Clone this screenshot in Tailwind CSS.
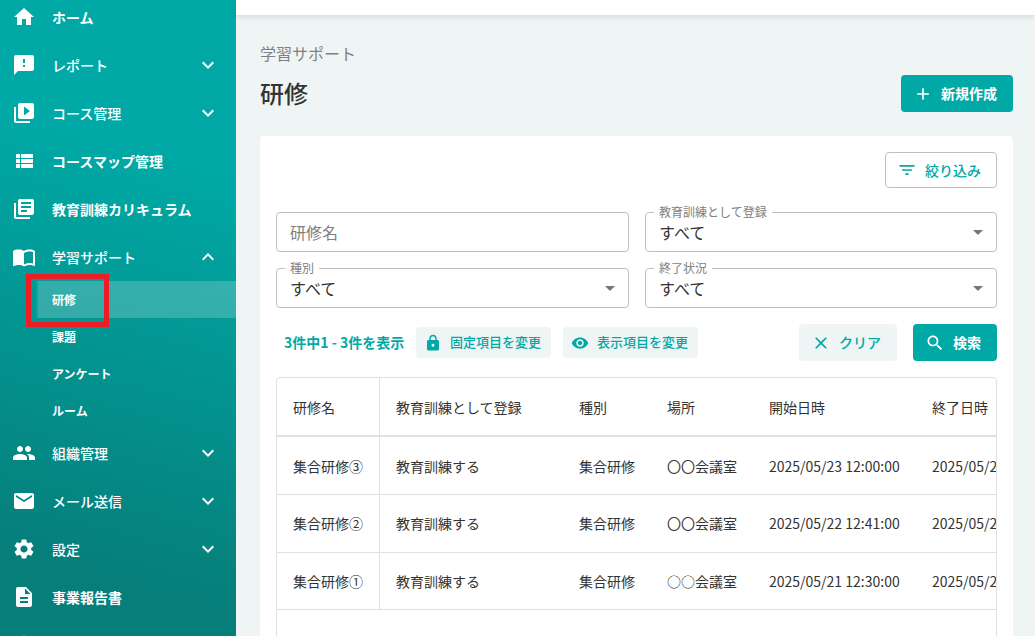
<!DOCTYPE html>
<html lang="ja">
<head>
  <meta charset="UTF-8" />
  <meta name="viewport" content="width=device-width, initial-scale=1.0" />
  <title>研修</title>
  <script src="https://cdn.jsdelivr.net/npm/@tailwindcss/browser@4"></script>
</head>
<body class="flex h-screen overflow-hidden bg-[#eff5f5] font-['Noto_Sans_CJK_JP',sans-serif] text-sm text-[#333]">

  <!-- Sidebar -->
  <aside class="h-screen w-[236px] shrink-0 overflow-hidden bg-[linear-gradient(195deg,#00a9a6_25%,#067e7a_88%)] text-white">
    <nav class="-mt-[7px]">
      <a class="flex h-12 items-center pl-3 font-bold">
        <svg class="mr-4 size-6" viewBox="0 0 24 24" fill="currentColor"><path d="M10 20v-6h4v6h5v-8h3L12 3 2 12h3v8z"/></svg>
        ホーム
      </a>
      <a class="flex h-12 items-center pl-3 pr-4 font-medium">
        <svg class="mr-4 size-6" viewBox="0 0 24 24" fill="currentColor"><path d="M20 2H4c-1.100 0-1.990.9-1.990 2L2 22l4-4h14c1.100 0 2-.9 2-2V4c0-1.100-.9-2-2-2zm-7 12h-2v-2h2v2zm0-4h-2V6h2v4z"/></svg>
        <span class="flex-1">レポート</span>
        <svg class="size-6" viewBox="0 0 24 24" fill="currentColor"><path d="M16.590 8.590 12 13.170 7.410 8.590 6 10l6 6 6-6z"/></svg>
      </a>
      <a class="flex h-12 items-center pl-3 pr-4 font-medium">
        <svg class="mr-4 size-6" viewBox="0 0 24 24" fill="currentColor"><path d="M4 6H2v14c0 1.100.9 2 2 2h14v-2H4V6zm16-4H8c-1.100 0-2 .9-2 2v12c0 1.100.9 2 2 2h12c1.100 0 2-.9 2-2V4c0-1.100-.9-2-2-2zm-8 12.500v-9l6 4.500-6 4.500z"/></svg>
        <span class="flex-1">コース管理</span>
        <svg class="size-6" viewBox="0 0 24 24" fill="currentColor"><path d="M16.590 8.590 12 13.170 7.410 8.590 6 10l6 6 6-6z"/></svg>
      </a>
      <a class="flex h-12 items-center pl-3 font-bold">
        <svg class="mr-4 size-6" viewBox="0 0 24 24" fill="currentColor"><path d="M4 14h4v-4H4v4zm0 5h4v-4H4v4zM4 9h4V5H4v4zm5 5h12v-4H9v4zm0 5h12v-4H9v4zM9 5v4h12V5H9z"/></svg>
        コースマップ管理
      </a>
      <a class="flex h-12 items-center pl-3 font-bold">
        <svg class="mr-4 size-6" viewBox="0 0 24 24" fill="currentColor"><path d="M4 6H2v14c0 1.100.9 2 2 2h14v-2H4V6zm16-4H8c-1.100 0-2 .9-2 2v12c0 1.100.9 2 2 2h12c1.100 0 2-.9 2-2V4c0-1.100-.9-2-2-2zm-1 9H9V9h10v2zm-4 4H9v-2h6v2zm4-8H9V5h10v2z"/></svg>
        教育訓練カリキュラム
      </a>
      <a class="flex h-12 items-center pl-3 pr-4 font-medium">
        <svg class="mr-4 size-6" viewBox="0 0 24 24" fill="currentColor"><path d="M21 5c-1.110-.35-2.330-.5-3.500-.5-1.950 0-4.050.4-5.500 1.500-1.450-1.100-3.550-1.500-5.500-1.500S2.450 4.900 1 6v14.650c0 .25.25.5.5.5.1 0 .15-.05.25-.05C3.100 20.450 5.050 20 6.500 20c1.950 0 4.050.4 5.500 1.500 1.350-.85 3.800-1.500 5.500-1.500 1.650 0 3.350.3 4.750 1.050.1.050.15.050.25.050.25 0 .5-.25.5-.5V6c-.6-.45-1.250-.75-2-1zm0 13.500c-1.100-.35-2.300-.5-3.500-.5-1.700 0-4.150.65-5.500 1.500V8c1.350-.85 3.800-1.500 5.500-1.500 1.200 0 2.400.15 3.500.5v11.500z"/></svg>
        <span class="flex-1">学習サポート</span>
        <svg class="size-6" viewBox="0 0 24 24" fill="currentColor"><path d="m12 8-6 6 1.410 1.410L12 10.830l4.590 4.580L18 14z"/></svg>
      </a>

      <div class="text-xs font-bold">
        <a class="relative ml-9 flex h-[37px] items-center border-l-2 border-[#00a9a6] bg-white/20 bg-clip-padding pl-3.5 pt-px">
          研修
          <span class="absolute -left-3 -top-[7px] h-[53px] w-[83px] border-[5px] border-[#ee1c25]"></span>
        </a>
        <a class="flex h-[37px] items-center pl-[52px] pt-px">課題</a>
        <a class="flex h-[37px] items-center pl-[52px] pt-px">アンケート</a>
        <a class="flex h-[37px] items-center pl-[52px] pt-px">ルーム</a>
      </div>

      <a class="flex h-12 items-center pl-3 pr-4 font-medium">
        <svg class="mr-4 size-6" viewBox="0 0 24 24" fill="currentColor"><path d="M16 11c1.660 0 2.990-1.340 2.990-3S17.660 5 16 5c-1.660 0-3 1.340-3 3s1.340 3 3 3zm-8 0c1.660 0 2.990-1.340 2.990-3S9.660 5 8 5C6.340 5 5 6.340 5 8s1.340 3 3 3zm0 2c-2.330 0-7 1.170-7 3.500V19h14v-2.500c0-2.330-4.670-3.500-7-3.500zm8 0c-.29 0-.62.020-.97.050 1.160.84 1.970 1.970 1.970 3.450V19h6v-2.500c0-2.330-4.670-3.500-7-3.500z"/></svg>
        <span class="flex-1">組織管理</span>
        <svg class="size-6" viewBox="0 0 24 24" fill="currentColor"><path d="M16.590 8.590 12 13.170 7.410 8.590 6 10l6 6 6-6z"/></svg>
      </a>
      <a class="flex h-12 items-center pl-3 pr-4 font-medium">
        <svg class="mr-4 size-6" viewBox="0 0 24 24" fill="currentColor"><path d="M20 4H4c-1.100 0-1.990.9-1.990 2L2 18c0 1.100.9 2 2 2h16c1.100 0 2-.9 2-2V6c0-1.100-.9-2-2-2zm0 4-8 5-8-5V6l8 5 8-5v2z"/></svg>
        <span class="flex-1">メール送信</span>
        <svg class="size-6" viewBox="0 0 24 24" fill="currentColor"><path d="M16.590 8.590 12 13.170 7.410 8.590 6 10l6 6 6-6z"/></svg>
      </a>
      <a class="flex h-12 items-center pl-3 pr-4 font-medium">
        <svg class="mr-4 size-6" viewBox="0 0 24 24" fill="currentColor"><path d="M19.140 12.940c.04-.3.060-.61.060-.94 0-.32-.02-.64-.07-.94l2.030-1.580c.18-.14.23-.41.12-.61l-1.920-3.320c-.12-.22-.37-.29-.59-.22l-2.390.96c-.5-.38-1.030-.7-1.620-.94l-.36-2.540c-.04-.24-.24-.41-.48-.41h-3.840c-.24 0-.43.17-.47.41l-.36 2.540c-.59.24-1.130.57-1.620.94l-2.390-.96c-.22-.08-.47 0-.59.22L2.740 8.870c-.12.21-.08.47.12.61l2.030 1.580c-.05.3-.09.63-.09.94s.02.64.07.94l-2.030 1.580c-.18.14-.23.41-.12.61l1.920 3.320c.12.22.37.29.59.22l2.390-.96c.5.38 1.030.7 1.620.94l.36 2.540c.05.24.24.41.48.41h3.840c.24 0 .44-.17.47-.41l.36-2.540c.59-.24 1.130-.56 1.620-.94l2.390.96c.22.08.47 0 .59-.22l1.920-3.320c.12-.22.07-.47-.12-.61l-2.010-1.580zM12 15.600c-1.980 0-3.600-1.620-3.600-3.600s1.620-3.600 3.600-3.600 3.600 1.620 3.600 3.600-1.620 3.600-3.600 3.600z"/></svg>
        <span class="flex-1">設定</span>
        <svg class="size-6" viewBox="0 0 24 24" fill="currentColor"><path d="M16.590 8.590 12 13.170 7.410 8.590 6 10l6 6 6-6z"/></svg>
      </a>
      <a class="flex h-12 items-center pl-3 font-bold">
        <svg class="mr-4 size-6" viewBox="0 0 24 24" fill="currentColor"><path d="M14 2H6c-1.100 0-1.990.9-1.990 2L4 20c0 1.100.89 2 1.990 2H18c1.100 0 2-.9 2-2V8l-6-6zm2 16H8v-2h8v2zm0-4H8v-2h8v2zm-3-5V3.500L18.500 9H13z"/></svg>
        事業報告書
      </a>
      <a class="flex h-12 items-center pl-3">
        <svg class="size-6" viewBox="0 0 24 24" fill="currentColor"><path d="m12 2 3 7 7 1-5 5 1 7-6-4-6 4 1-7-5-5 7-1z"/></svg>
      </a>
    </nav>
  </aside>

  <div class="flex min-w-0 flex-1 flex-col">
    <header class="h-[15px] shrink-0 bg-white shadow-[0_1px_6px_rgba(0,0,0,0.15)]"></header>

    <main class="pl-6 pr-[22px] pt-[26px]">
      <p class="text-base leading-6 text-[#808080]">学習サポート</p>
      <div class="mt-2.5 flex h-[37px] items-center justify-between">
        <h1 class="pb-0.5 text-2xl font-medium">研修</h1>
        <button class="flex h-[37px] w-28 items-center rounded bg-[#00a9a6] pl-3 font-bold text-white">
          <svg class="mr-2 size-5" viewBox="0 0 24 24" fill="currentColor"><path d="M19 13h-6v6h-2v-6H5v-2h6V5h2v6h6v2z"/></svg>
          <span class="pb-0.5">新規作成</span>
        </button>
      </div>

      <section class="mt-6 h-[520px] rounded bg-white p-4">
        <div class="flex justify-end">
          <button class="flex h-9 w-28 items-center rounded border border-[#c0c0c0] pl-[11px] font-medium text-[#00a9a6]">
            <svg class="mr-2 size-5" viewBox="0 0 24 24" fill="currentColor"><path d="M10 18h4v-2h-4v2zM3 6v2h18V6H3zm3 7h12v-2H6v2z"/></svg>
            絞り込み
          </button>
        </div>

        <!-- Search conditions -->
        <div class="mt-6 grid grid-cols-[353px_352px] gap-4">
          <div class="flex h-10 items-center rounded border border-[#c0c0c0] px-[13px] text-base text-[#808080]">研修名</div>
          <div class="relative flex h-10 items-center justify-between rounded border border-[#c0c0c0] pl-[13px] pr-1.5 text-base">
            <span class="absolute left-2 -top-[9px] bg-white px-[5px] text-xs leading-4 text-[#808080]">教育訓練として登録</span>
            <span>すべて</span>
            <svg class="size-6 text-[#757575]" viewBox="0 0 24 24" fill="currentColor"><path d="m7 10 5 5 5-5z"/></svg>
          </div>
          <div class="relative flex h-10 items-center justify-between rounded border border-[#c0c0c0] pl-[13px] pr-1.5 text-base">
            <span class="absolute left-2 -top-[9px] bg-white px-[5px] text-xs leading-4 text-[#808080]">種別</span>
            <span>すべて</span>
            <svg class="size-6 text-[#757575]" viewBox="0 0 24 24" fill="currentColor"><path d="m7 10 5 5 5-5z"/></svg>
          </div>
          <div class="relative flex h-10 items-center justify-between rounded border border-[#c0c0c0] pl-[13px] pr-1.5 text-base">
            <span class="absolute left-2 -top-[9px] bg-white px-[5px] text-xs leading-4 text-[#808080]">終了状況</span>
            <span>すべて</span>
            <svg class="size-6 text-[#757575]" viewBox="0 0 24 24" fill="currentColor"><path d="m7 10 5 5 5-5z"/></svg>
          </div>
        </div>

        <!-- Actions -->
        <div class="mt-4 flex h-[37px] items-center text-[#00a9a6]">
          <span class="w-[140px] whitespace-nowrap pb-0.5 pl-2 font-bold">3件中1 - 3件を表示</span>
          <button class="flex h-[31px] w-[135px] items-center rounded bg-[#eff5f5] pl-2 text-[13px] font-medium">
            <svg class="mr-2 size-[18px]" viewBox="0 0 24 24" fill="currentColor"><path d="M18 8h-1V6c0-2.760-2.240-5-5-5S7 3.240 7 6v2H6c-1.100 0-2 .9-2 2v10c0 1.100.9 2 2 2h12c1.100 0 2-.9 2-2V10c0-1.100-.9-2-2-2zm-6 9c-1.100 0-2-.9-2-2s.9-2 2-2 2 .9 2 2-.9 2-2 2zm3.100-9H8.900V6c0-1.710 1.390-3.100 3.100-3.100s3.100 1.390 3.100 3.100v2z"/></svg>
            固定項目を変更
          </button>
          <button class="ml-3 flex h-[31px] w-[135px] items-center rounded bg-[#eff5f5] pl-2 text-[13px] font-medium">
            <svg class="mr-2 size-[18px]" viewBox="0 0 24 24" fill="currentColor"><path d="M12 4.500C7 4.500 2.730 7.610 1 12c1.730 4.390 6 7.500 11 7.500s9.270-3.110 11-7.500c-1.730-4.390-6-7.500-11-7.500zM12 17c-2.760 0-5-2.240-5-5s2.240-5 5-5 5 2.240 5 5-2.240 5-5 5zm0-8c-1.660 0-3 1.340-3 3s1.340 3 3 3 3-1.340 3-3-1.340-3-3-3z"/></svg>
            表示項目を変更
          </button>
          <button class="ml-auto flex h-[37px] w-[98px] items-center rounded bg-[#eff5f5] pl-3 font-medium">
            <svg class="mr-2 size-5" viewBox="0 0 24 24" fill="currentColor"><path d="M19 6.410 17.590 5 12 10.590 6.410 5 5 6.410 10.590 12 5 17.590 6.410 19 12 13.410 17.590 19 19 17.590 13.410 12z"/></svg>
            <span class="pb-0.5">クリア</span>
          </button>
          <button class="ml-4 flex h-[37px] w-[84px] items-center rounded bg-[#00a9a6] pl-3 font-bold text-white">
            <svg class="mr-2 size-5" viewBox="0 0 24 24" fill="currentColor"><path d="M15.500 14h-.79l-.28-.27C15.410 12.590 16 11.110 16 9.500 16 5.910 13.090 3 9.500 3S3 5.910 3 9.500 5.910 16 9.500 16c1.610 0 3.090-.59 4.230-1.570l.27.28v.79l5 4.990L20.490 19l-4.990-5zm-6 0C7.010 14 5 11.990 5 9.500S7.010 5 9.500 5 14 7.010 14 9.500 11.990 14 9.500 14z"/></svg>
            <span class="pb-0.5">検索</span>
          </button>
        </div>

        <!-- Training list -->
        <div class="mt-4 h-[300px] overflow-hidden rounded border border-[#e0e0e0]">
          <table class="w-[803px] table-fixed border-separate border-spacing-0 whitespace-nowrap text-left">
            <thead>
              <tr class="h-[59px] *:border-b-2 *:border-[#e0e0e0] *:px-4 *:font-normal">
                <th class="w-[103px] border-r">研修名</th>
                <th class="w-[183px]">教育訓練として登録</th>
                <th class="w-[88px]">種別</th>
                <th class="w-[102px]">場所</th>
                <th class="w-[163px]">開始日時</th>
                <th class="w-[164px]">終了日時</th>
              </tr>
            </thead>
            <tbody>
              <tr class="h-[58px] *:border-b *:border-[#e0e0e0] *:px-4">
                <td class="border-r">集合研修③</td>
                <td>教育訓練する</td>
                <td>集合研修</td>
                <td>〇〇会議室</td>
                <td>2025/05/23 12:00:00</td>
                <td>2025/05/23 15:00:00</td>
              </tr>
              <tr class="h-[58px] *:border-b *:border-[#e0e0e0] *:px-4 *:pb-0.5">
                <td class="border-r">集合研修②</td>
                <td>教育訓練する</td>
                <td>集合研修</td>
                <td>〇〇会議室</td>
                <td>2025/05/22 12:41:00</td>
                <td>2025/05/22 15:00:00</td>
              </tr>
              <tr class="h-[57px] *:border-b *:border-[#e0e0e0] *:px-4">
                <td class="border-r">集合研修①</td>
                <td>教育訓練する</td>
                <td>集合研修</td>
                <td>○○会議室</td>
                <td>2025/05/21 12:30:00</td>
                <td>2025/05/21 15:00:00</td>
              </tr>
            </tbody>
          </table>
        </div>
      </section>
    </main>
  </div>

</body>
</html>
